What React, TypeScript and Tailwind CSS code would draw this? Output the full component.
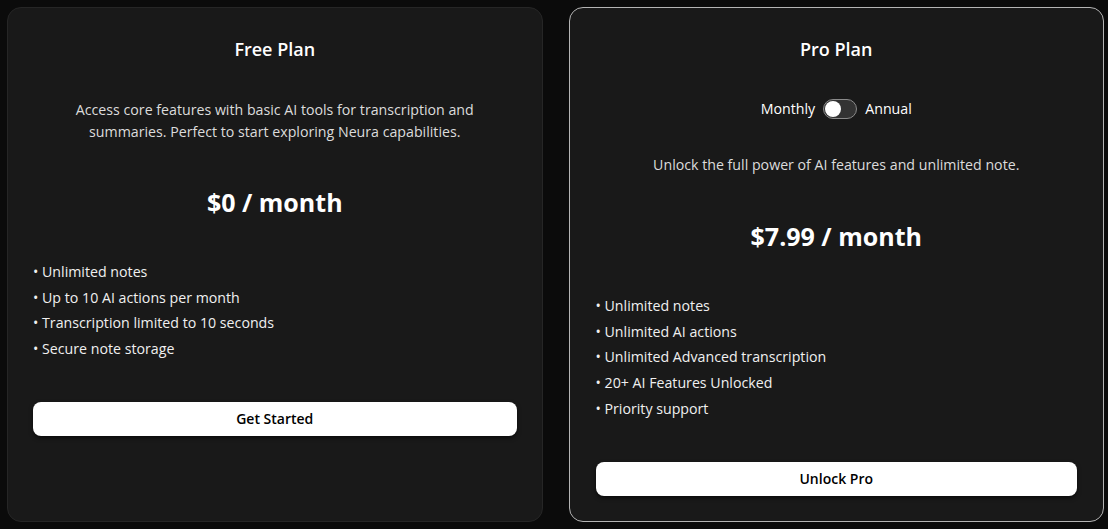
import { useState } from 'react'

const freeFeatures = [
  'Unlimited notes',
  'Up to 10 AI actions per month',
  'Transcription limited to 10 seconds',
  'Secure note storage',
]

const proFeatures = [
  'Unlimited notes',
  'Unlimited AI actions',
  'Unlimited Advanced transcription',
  '20+ AI Features Unlocked',
  'Priority support',
]

function FeatureList({ items }: { items: string[] }) {
  return (
    <ul className="mt-[39px] text-[14.2px] leading-[25.7px] text-[#f0f0f0]">
      {items.map((f) => (
        <li key={f}>• {f}</li>
      ))}
    </ul>
  )
}

function CtaButton({ label }: { label: string }) {
  return (
    <button
      type="button"
      className="mt-[40px] h-[34px] w-full rounded-lg bg-white text-[14px] font-semibold text-black shadow-[0_2px_4px_rgba(0,0,0,0.6)]"
    >
      {label}
    </button>
  )
}

export default function App() {
  const [annual, setAnnual] = useState(false)

  return (
    <div
      className="grid h-[529px] w-[1108px] grid-cols-2 gap-[26px] bg-[#0b0b0b] pt-[7px] pr-[4px] pb-[7px] pl-[7px] text-white"
      style={{ fontFamily: '"Open Sans", "Noto Sans", sans-serif' }}
    >
      <section className="flex flex-col rounded-[14px] border border-[#262626] bg-[#191919] px-[25px] pt-[27px]">
        <h2 className="text-center text-[18px] font-semibold leading-7">Free Plan</h2>
        <p className="mt-[36px] px-[30px] text-center text-[14.2px] leading-[22px] text-[#dcdcdc]">
          Access core features with basic AI tools for transcription and summaries. Perfect to start
          exploring Neura capabilities.
        </p>
        <div className="mt-[41px] text-center text-[25px] font-bold leading-9">$0 / month</div>
        <FeatureList items={freeFeatures} />
        <CtaButton label="Get Started" />
      </section>

      <section className="flex flex-col rounded-[14px] border border-[#b4b4b4] bg-[#191919] px-[26px] pt-[27px]">
        <h2 className="text-center text-[18px] font-semibold leading-7">Pro Plan</h2>
        <div className="mt-[35px] flex h-[22px] items-center justify-center gap-[8px] text-[14.2px]">
          <span>Monthly</span>
          <button
            type="button"
            onClick={() => setAnnual(!annual)}
            aria-pressed={annual}
            className={[
              'flex h-[20px] w-[34px] items-center rounded-full border border-[#8a8a8a] bg-[#333] px-[1px]',
              annual ? 'justify-end' : 'justify-start',
            ].join(' ')}
          >
            <span className="h-[16px] w-[16px] rounded-full bg-white" />
          </button>
          <span>Annual</span>
        </div>
        <p className="mt-[34px] text-center text-[14.2px] leading-[22px] text-[#dcdcdc]">
          Unlock the full power of AI features and unlimited note.
        </p>
        <div className="mt-[42px] text-center text-[25px] font-bold leading-9">
          {annual ? '$79.99 / year' : '$7.99 / month'}
        </div>
        <FeatureList items={proFeatures} />
        <CtaButton label="Unlock Pro" />
      </section>
    </div>
  )
}
